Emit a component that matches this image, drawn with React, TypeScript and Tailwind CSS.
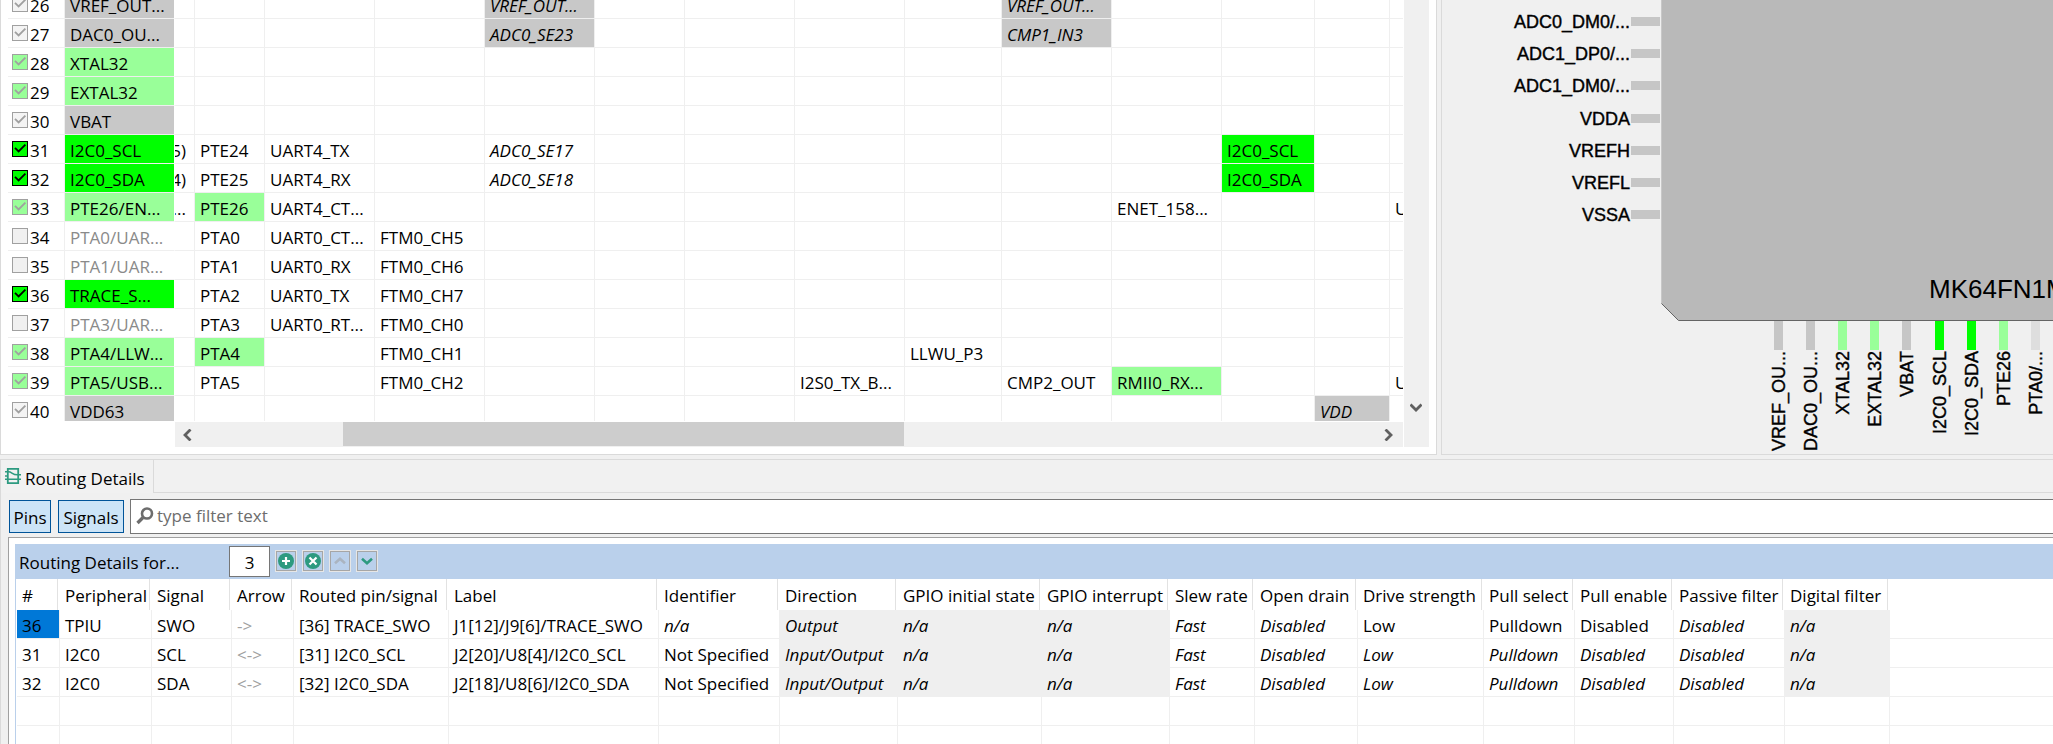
import React from "react";

type Tone = "none" | "gray" | "light" | "bright" | "muted";

const toneClass: Record<Tone, string> = {
  none: "",
  gray: "bg-[#c8c8c8]",
  light: "bg-[#99ff99]",
  bright: "bg-[#00ff00]",
  muted: "text-[#8a8a8a]",
};

interface PinCell {
  text: string;
  tone?: Tone;
  italic?: boolean;
}

interface PinRow {
  num: number;
  name: string;
  tone: Tone;
  cells: Record<number, PinCell>;
}

const pinRows: PinRow[] = [
  { num: 26, name: "VREF_OUT...", tone: "gray", cells: { 4: { text: "VREF_OUT...", tone: "gray", italic: true }, 9: { text: "VREF_OUT...", tone: "gray", italic: true } } },
  { num: 27, name: "DAC0_OU...", tone: "gray", cells: { 4: { text: "ADC0_SE23", tone: "gray", italic: true }, 9: { text: "CMP1_IN3", tone: "gray", italic: true } } },
  { num: 28, name: "XTAL32", tone: "light", cells: {} },
  { num: 29, name: "EXTAL32", tone: "light", cells: {} },
  { num: 30, name: "VBAT", tone: "gray", cells: {} },
  { num: 31, name: "I2C0_SCL", tone: "bright", cells: { 0: { text: "5)" }, 1: { text: "PTE24" }, 2: { text: "UART4_TX" }, 4: { text: "ADC0_SE17", italic: true }, 11: { text: "I2C0_SCL", tone: "bright" } } },
  { num: 32, name: "I2C0_SDA", tone: "bright", cells: { 0: { text: "4)" }, 1: { text: "PTE25" }, 2: { text: "UART4_RX" }, 4: { text: "ADC0_SE18", italic: true }, 11: { text: "I2C0_SDA", tone: "bright" } } },
  { num: 33, name: "PTE26/EN...", tone: "light", cells: { 0: { text: "..." }, 1: { text: "PTE26", tone: "light" }, 2: { text: "UART4_CT..." }, 10: { text: "ENET_158..." }, 13: { text: "U" } } },
  { num: 34, name: "PTA0/UAR...", tone: "muted", cells: { 1: { text: "PTA0" }, 2: { text: "UART0_CT..." }, 3: { text: "FTM0_CH5" } } },
  { num: 35, name: "PTA1/UAR...", tone: "muted", cells: { 1: { text: "PTA1" }, 2: { text: "UART0_RX" }, 3: { text: "FTM0_CH6" } } },
  { num: 36, name: "TRACE_S...", tone: "bright", cells: { 1: { text: "PTA2" }, 2: { text: "UART0_TX" }, 3: { text: "FTM0_CH7" } } },
  { num: 37, name: "PTA3/UAR...", tone: "muted", cells: { 1: { text: "PTA3" }, 2: { text: "UART0_RT..." }, 3: { text: "FTM0_CH0" } } },
  { num: 38, name: "PTA4/LLW...", tone: "light", cells: { 1: { text: "PTA4", tone: "light" }, 3: { text: "FTM0_CH1" }, 8: { text: "LLWU_P3" } } },
  { num: 39, name: "PTA5/USB...", tone: "light", cells: { 1: { text: "PTA5" }, 3: { text: "FTM0_CH2" }, 7: { text: "I2S0_TX_B..." }, 9: { text: "CMP2_OUT" }, 10: { text: "RMII0_RX...", tone: "light" }, 13: { text: "U" } } },
  { num: 40, name: "VDD63", tone: "gray", cells: { 12: { text: "VDD", tone: "gray", italic: true } } },
];

const pinColumnWidths = [
  "w-[20px]", "w-[70px]", "w-[110px]", "w-[110px]", "w-[110px]", "w-[90px]", "w-[110px]",
  "w-[110px]", "w-[97px]", "w-[110px]", "w-[110px]", "w-[93px]", "w-[75px]", "w-[110px]",
];

const boxClass: Record<Tone, string> = {
  none: "",
  gray: "border-[#a0a0a0] bg-[#f4f4f4] text-[#a0a0a0]",
  light: "border-[#a0a0a0] bg-[#99ff99] text-[#a0a0a0]",
  bright: "border-black bg-[#00ff00] text-black",
  muted: "border-[#a0a0a0] bg-[#f0f0f0] text-transparent",
};

function PinCheckbox({ row }: { row: PinRow }) {
  return (
    <label className="flex h-7 items-center gap-0.5">
      <span className={`relative block size-4 shrink-0 border ${boxClass[row.tone]}`}>
        <input
          type="checkbox"
          defaultChecked={row.tone !== "muted"}
          className="absolute inset-0 size-full appearance-none"
        />
        <svg viewBox="0 0 14 14" className="pointer-events-none relative block size-full">
          <path d="M2 5.800 5.600 9.400 12.400 2.600" fill="none" stroke="currentColor" strokeWidth="1.800" />
        </svg>
      </span>
      <span className="pt-1 leading-6">{row.num}</span>
    </label>
  );
}

function PinsTable() {
  return (
    <table className="-mt-2.5 ml-2 w-[1492px] table-fixed border-separate border-spacing-0">
      <colgroup>
        <col className="w-[57px]" />
        <col className="w-[110px]" />
        {pinColumnWidths.map((width, i) => (
          <col key={i} className={width} />
        ))}
      </colgroup>
      <tbody>
        {pinRows.map((row) => (
          <tr key={row.num}>
            <td className="border-r border-b border-[#efefef] p-0 pl-1">
              <PinCheckbox row={row} />
            </td>
            <td className={`overflow-hidden border-r border-b border-[#efefef] border-r-white p-0 whitespace-nowrap ${toneClass[row.tone]}`}>
              <div className="h-7 pt-1 pl-[5px] leading-6">{row.name}</div>
            </td>
            {pinColumnWidths.map((_, i) => {
              const cell = row.cells[i];
              const tone = toneClass[cell?.tone ?? "none"];
              const slant = cell?.italic ? "italic" : "";
              return (
                <td key={i} className={`overflow-hidden border-r border-b border-[#efefef] p-0 whitespace-nowrap ${tone} ${slant}`}>
                  <div className={i === 0 ? "flex h-7 justify-end overflow-hidden pt-1 pr-2 leading-6" : "h-7 pt-1 pl-[5px] leading-6"}>
                    {cell?.text}
                  </div>
                </td>
              );
            })}
          </tr>
        ))}
      </tbody>
    </table>
  );
}

function Chevron({ d }: { d: string }) {
  return (
    <svg viewBox="0 0 12 12" className="block size-3 shrink-0 text-[#606060]">
      <path d={d} fill="none" stroke="currentColor" strokeWidth="2.800" />
    </svg>
  );
}

function PinsPanel() {
  return (
    <section className="flex w-[70%] shrink-0 flex-col border border-t-0 border-[#dadada] bg-white pr-[7px] pb-[7px]">
      <div className="flex min-h-0 flex-1">
        <div className="-ml-px min-w-0 flex-1 overflow-hidden">
          <div className="h-[421px] overflow-hidden">
            <PinsTable />
          </div>
          <div className="mt-px ml-[175px] flex h-[25px] items-center bg-[#f0f0f0] px-2">
            <button aria-label="Scroll left"><Chevron d="M7.500 .5 2 6l5.500 5.500" /></button>
            <span className="flex h-full flex-1 pl-[148px]">
              <span className="h-6 w-[561px] bg-[#cdcdcd]" />
            </span>
            <button aria-label="Scroll right"><Chevron d="M2.500 .5 8 6l-5.500 5.500" /></button>
          </div>
        </div>
        <div className="ml-px flex w-[25px] flex-col items-center justify-end bg-[#f0f0f0] pr-0.5 pb-[33px]">
          <button aria-label="Scroll down"><Chevron d="M.5 2.500 6 8l5.500-5.500" /></button>
        </div>
      </div>
    </section>
  );
}

const leftPins = [
  { label: "ADC0_DM0/...", y: 17 },
  { label: "ADC1_DP0/...", y: 49 },
  { label: "ADC1_DM0/...", y: 81 },
  { label: "VDDA", y: 114 },
  { label: "VREFH", y: 146 },
  { label: "VREFL", y: 178 },
  { label: "VSSA", y: 210 },
];

const bottomPins = [
  { label: "VREF_OU...", x: 332, color: "#c6c6c6" },
  { label: "DAC0_OU...", x: 364, color: "#c6c6c6" },
  { label: "XTAL32", x: 396, color: "#99ff99" },
  { label: "EXTAL32", x: 428, color: "#99ff99" },
  { label: "VBAT", x: 460, color: "#c6c6c6" },
  { label: "I2C0_SCL", x: 493, color: "#00ff00" },
  { label: "I2C0_SDA", x: 525, color: "#00ff00" },
  { label: "PTE26", x: 557, color: "#99ff99" },
  { label: "PTA0/...", x: 589, color: "#dedede" },
];

function PackagePanel() {
  return (
    <section className="ml-1 min-w-0 flex-1 border-b border-l border-[#dadada] bg-[#f0f0f0]">
      <svg className="block h-full w-full overflow-hidden font-['Liberation_Sans',sans-serif] text-[18px]">
        <path d="M219.500 -1V303.500L236.500 320.500H1200V-1Z" fill="#b9b9b9" />
        <path d="M219.500 -1V303" stroke="#c8c8c8" fill="none" />
        <path d="M219.500 303.500L236.500 320.500H1200" stroke="#646464" fill="none" />
        {leftPins.map((pin) => (
          <g key={pin.label}>
            <rect x="189" y={pin.y} width="29" height="9" fill="#c6c6c6" />
            <text x="188" y={pin.y + 11} textAnchor="end" stroke="#000" strokeWidth="0.4">
              {pin.label}
            </text>
          </g>
        ))}
        {bottomPins.map((pin) => (
          <g key={pin.label}>
            <rect x={pin.x} y="321" width="9" height="29" fill={pin.color} />
            <text
              transform={`translate(${pin.x + 11} 351) rotate(-90)`}
              textAnchor="end"
              stroke="#000"
              strokeWidth="0.4"
            >
              {pin.label}
            </text>
          </g>
        ))}
        <text x="487" y="298" className="text-[26px]">MK64FN1M0VLL12</text>
      </svg>
    </section>
  );
}

interface RoutingColumn {
  title: string;
  width: string;
  locked?: boolean;
}

const routingColumns: RoutingColumn[] = [
  { title: "#", width: "w-[43px]" },
  { title: "Peripheral", width: "w-[92px]" },
  { title: "Signal", width: "w-[80px]" },
  { title: "Arrow", width: "w-[62px]" },
  { title: "Routed pin/signal", width: "w-[155px]" },
  { title: "Label", width: "w-[210px]" },
  { title: "Identifier", width: "w-[121px]" },
  { title: "Direction", width: "w-[118px]", locked: true },
  { title: "GPIO initial state", width: "w-[144px]", locked: true },
  { title: "GPIO interrupt", width: "w-[128px]", locked: true },
  { title: "Slew rate", width: "w-[85px]" },
  { title: "Open drain", width: "w-[103px]" },
  { title: "Drive strength", width: "w-[126px]" },
  { title: "Pull select", width: "w-[91px]" },
  { title: "Pull enable", width: "w-[99px]" },
  { title: "Passive filter", width: "w-[111px]" },
  { title: "Digital filter", width: "w-[105px]", locked: true },
];

// A leading "*" marks a default value, which is shown in italics.
const routingRows: string[][] = [
  ["36", "TPIU", "SWO", "->", "[36] TRACE_SWO", "J1[12]/J9[6]/TRACE_SWO", "*n/a", "*Output", "*n/a", "*n/a", "*Fast", "*Disabled", "Low", "Pulldown", "Disabled", "*Disabled", "*n/a"],
  ["31", "I2C0", "SCL", "<->", "[31] I2C0_SCL", "J2[20]/U8[4]/I2C0_SCL", "Not Specified", "*Input/Output", "*n/a", "*n/a", "*Fast", "*Disabled", "*Low", "*Pulldown", "*Disabled", "*Disabled", "*n/a"],
  ["32", "I2C0", "SDA", "<->", "[32] I2C0_SDA", "J2[18]/U8[6]/I2C0_SDA", "Not Specified", "*Input/Output", "*n/a", "*n/a", "*Fast", "*Disabled", "*Low", "*Pulldown", "*Disabled", "*Disabled", "*n/a"],
  [],
  [],
];

function RoutingTable() {
  return (
    <table className="w-full table-fixed border-separate border-spacing-0">
      <colgroup>
        {routingColumns.map((c) => (
          <col key={c.title} className={c.width} />
        ))}
        <col />
      </colgroup>
      <thead>
        <tr>
          {routingColumns.map((c) => (
            <th key={c.title} scope="col" className="p-0 pr-0.5 text-left font-normal whitespace-nowrap">
              <div className="h-[31px] border-r border-[#e2e2e2] pt-1 pl-[5px] leading-[26px]">{c.title}</div>
            </th>
          ))}
          <td />
        </tr>
      </thead>
      <tbody>
        {routingRows.map((row, r) => (
          <tr key={r}>
            {routingColumns.map((c, i) => {
              const value = row[i] ?? "";
              const italic = value.startsWith("*");
              const fill = r === 0 && i === 0 ? "bg-[#0078d7]" : c.locked && row.length ? "bg-[#efefef]" : "";
              const color = i === 3 ? "text-[#a0a0a0]" : "";
              return (
                <td key={c.title} className={`border-r border-b border-[#efefef] p-0 whitespace-nowrap ${fill} ${color} ${italic ? "italic" : ""}`}>
                  <div className="h-7 pt-1 pl-[5px] leading-6">{italic ? value.slice(1) : value}</div>
                </td>
              );
            })}
            <td className="border-b border-[#efefef]" />
          </tr>
        ))}
      </tbody>
    </table>
  );
}

function BarButton({ label, children }: { label: string; children: React.ReactNode }) {
  return (
    <button aria-label={label} className="size-[22px] border border-[#e6e6e6]">
      <span className="flex size-full items-center justify-center border border-[#a6a6a6]">
        <svg viewBox="0 0 18 18" className="size-[18px]">{children}</svg>
      </span>
    </button>
  );
}

function RoutingPanel() {
  return (
    <section className="mt-1 flex min-h-0 flex-1 flex-col border-t border-l border-[#dadada]">
      <div className="flex h-[33px] shrink-0 bg-[#f1f1f1]" role="tablist">
        <button role="tab" aria-selected="true" className="flex items-center gap-1 border-r border-[#dadada] pr-2 pl-1">
          <svg viewBox="0 0 16 16" className="-mt-0.5 size-4 text-[#2d9a80]" fill="none" stroke="currentColor">
            <path d="M2.800 .9h10.400v14.200H2.800Z" strokeWidth="1.800" />
            <path d="M0 3.800h3.500c3.500 0 3.500 3 9 3H16M0 8h2.500M0 11.300h16" strokeWidth="1.500" />
          </svg>
          <span className="pt-[5px] leading-6">Routing Details</span>
        </button>
        <div className="flex-1 border-b border-[#dadada]" />
      </div>
      <div className="flex shrink-0 items-start pt-[6px] pl-2">
        <button className="mt-px h-[33px] w-[42px] shrink-0 border border-[#005499] bg-[#cce4f7] pt-0.5">Pins</button>
        <button className="mt-px ml-[7px] h-[33px] w-[66px] shrink-0 border border-[#005499] bg-[#cce4f7] pt-0.5">Signals</button>
        <label className="ml-[6px] flex h-[35px] flex-1 items-center gap-[3px] border border-r-0 border-[#767676] bg-white pl-[5px]">
          <svg viewBox="0 0 18 18" className="-mt-0.5 size-[18px] shrink-0 text-[#6d6d6d]" fill="none" stroke="currentColor">
            <circle cx="11" cy="6.500" r="5" strokeWidth="2.600" />
            <path d="M7 10.500 1.500 16" strokeWidth="3.400" />
          </svg>
          <input type="text" aria-label="Filter" placeholder="type filter text" className="min-w-0 flex-1 pb-0.5 outline-none placeholder:text-[#6d6d6d]" />
        </label>
      </div>
      <div className="mt-[3px] ml-[7px] flex min-h-0 flex-1 flex-col overflow-hidden border-t border-l border-[#a0a0a0] bg-white pt-[6px] pl-[6px]">
        <div className="flex h-[35px] shrink-0 items-start bg-[#bad0eb] pt-0.5 pl-1">
          <label htmlFor="route-count" className="w-[210px] pt-[5px] leading-6">Routing Details for...</label>
          <input id="route-count" type="text" defaultValue="3" className="h-[31px] w-[41px] border border-[#767676] bg-white pt-0.5 text-center" />
          <div className="mt-1 ml-[5px] flex gap-[5px]">
            <BarButton label="Add route">
              <circle cx="9" cy="9" r="8" fill="#2d9a80" />
              <path d="M9 5v8M5 9h8" stroke="#fff" strokeWidth="2.200" />
            </BarButton>
            <BarButton label="Remove route">
              <circle cx="9" cy="9" r="8" fill="#2d9a80" />
              <path d="M5.500 5.500l7 7M12.500 5.500l-7 7" stroke="#fff" strokeWidth="2.200" />
            </BarButton>
            <BarButton label="Move up">
              <path d="M4 11.200 9 6.800l5 4.400" stroke="#aab4c0" strokeWidth="2.600" fill="none" />
            </BarButton>
            <BarButton label="Move down">
              <path d="M4 6.800 9 11.200l5-4.400" stroke="#2d9a80" strokeWidth="2.600" fill="none" />
            </BarButton>
          </div>
        </div>
        <div className="min-h-0 flex-1 overflow-hidden border-l border-[#bad0eb] pl-px">
          <RoutingTable />
        </div>
      </div>
    </section>
  );
}

export default function App() {
  return (
    <main className="flex h-screen flex-col overflow-hidden bg-[#f0f0f0] font-['Open_Sans','Noto_Sans',sans-serif] text-[17px] text-black">
      <div className="flex h-[455px] shrink-0">
        <PinsPanel />
        <PackagePanel />
      </div>
      <RoutingPanel />
    </main>
  );
}
